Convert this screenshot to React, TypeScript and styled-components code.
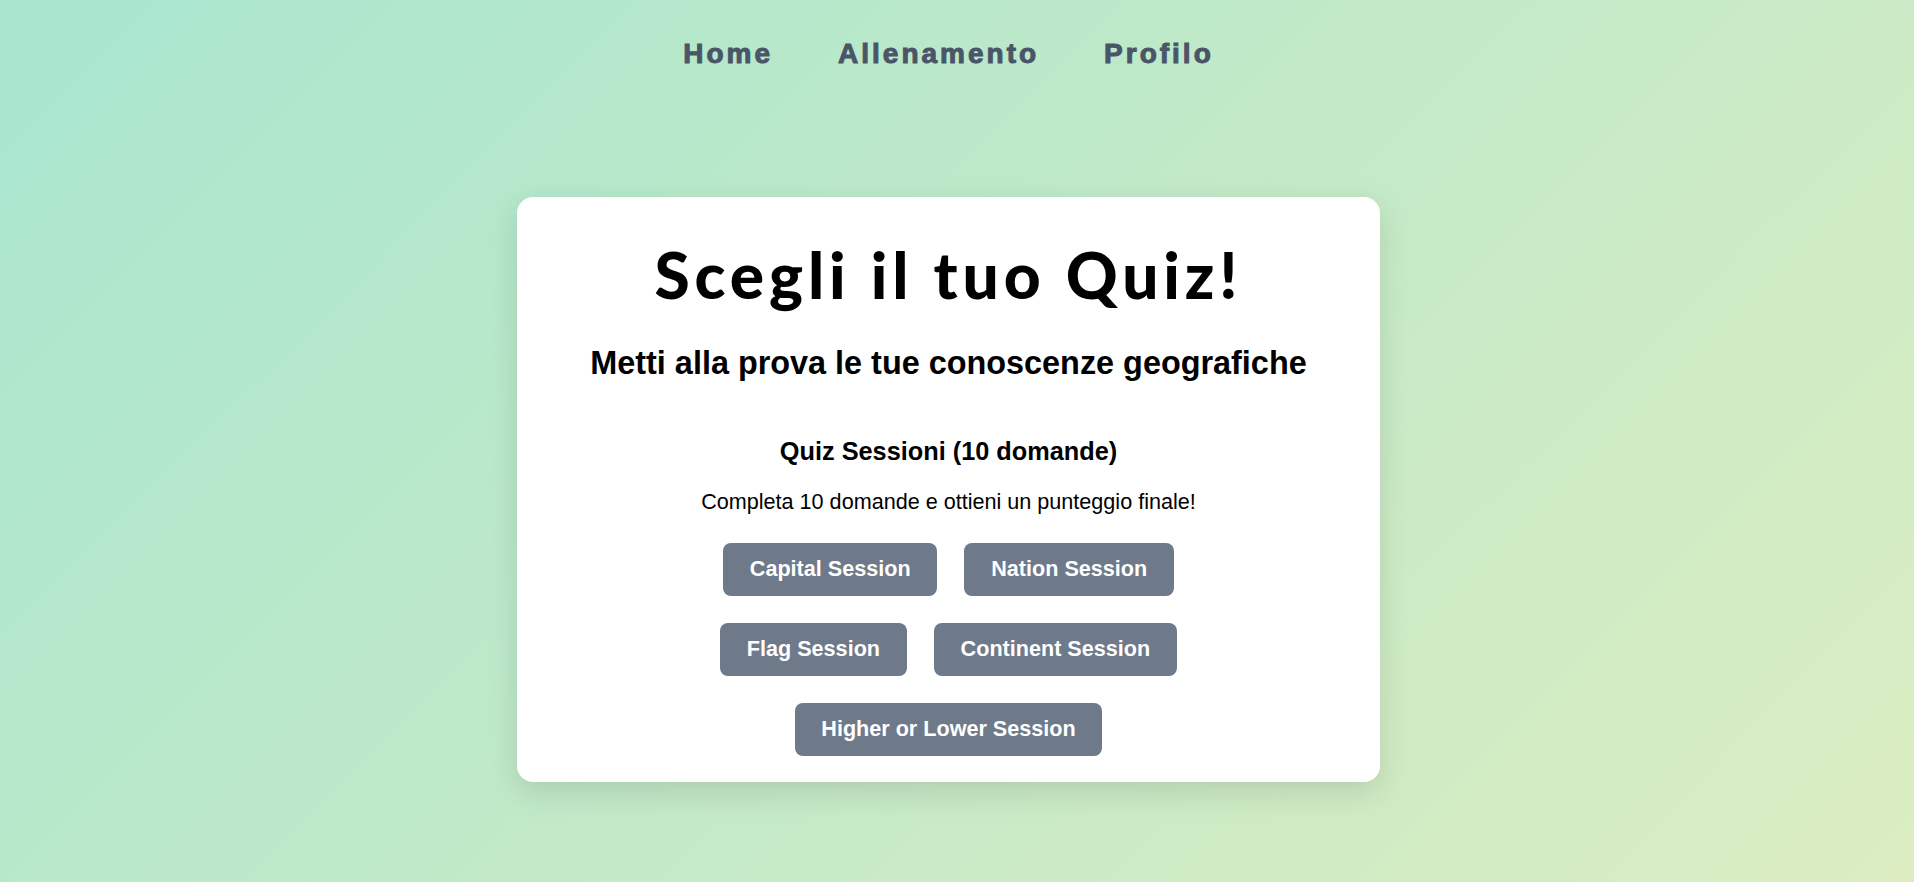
import React from "react";
import styled, { createGlobalStyle } from "styled-components";

const GlobalStyle = createGlobalStyle`
  html {
    background: linear-gradient(135deg, #a8e6cf 0%, #dcedc1 100%);
    min-height: 100%;
  }
  body {
    margin: 8px;
    font-family: "Liberation Sans", Arial, sans-serif;
    font-size: 21.6px;
    color: #000;
  }
`;

/* The reference layout is centred in a viewport narrowed by a 17px scrollbar. */
const Page = styled.div`
  min-height: 100vh;
  margin-right: 17px;
  display: flex;
  flex-direction: column;
  align-items: center;
`;

const Nav = styled.nav`
  display: flex;
  justify-content: center;
  gap: 65px;
  padding-top: 30px;
`;

const NavLink = styled.a`
  font-family: "Liberation Sans", Arial, sans-serif;
  font-size: 28px;
  line-height: 32px;
  font-weight: 700;
  letter-spacing: 3px;
  color: #4a5568;
  -webkit-text-stroke: 1px #4a5568;
  text-decoration: none;
  cursor: pointer;
`;

const Card = styled.main`
  box-sizing: border-box;
  width: 863px;
  margin-top: 127px;
  padding: 41px 30px 26px;
  background: #ffffff;
  border-radius: 16px;
  box-shadow: 0 10px 30px rgba(0, 0, 0, 0.12);
  text-align: center;
`;

const Title = styled.h1`
  margin: 0;
  font-family: "Comic Sans MS", "Lato", sans-serif;
  font-weight: 900;
  font-size: 64px;
  line-height: 73px;
  letter-spacing: 4.9px;
`;

const Subtitle = styled.h2`
  margin: 34px 0 0;
  font-size: 32.4px;
  line-height: 37.3px;
  font-weight: 700;
`;

const SectionTitle = styled.h3`
  margin: 55px 0 0;
  font-size: 25.3px;
  line-height: 29.1px;
  font-weight: 700;
`;

const Description = styled.p`
  margin: 24px 0 0;
  font-size: 21.6px;
  line-height: 24.8px;
`;

const ButtonStack = styled.div`
  margin-top: 28px;
  display: flex;
  flex-direction: column;
  gap: 27px;
`;

const ButtonRow = styled.div`
  display: flex;
  justify-content: center;
  gap: 27px;
`;

const SessionButton = styled.button`
  font-family: "Liberation Sans", Arial, sans-serif;
  font-size: 21.6px;
  line-height: 24.8px;
  font-weight: 700;
  color: #ffffff;
  background: #6e7a8a;
  border: none;
  border-radius: 8px;
  padding: 14px 26.8px;
  cursor: pointer;
`;

const rows: string[][] = [
  ["Capital Session", "Nation Session"],
  ["Flag Session", "Continent Session"],
  ["Higher or Lower Session"],
];

export default function App() {
  return (
    <>
      <GlobalStyle />
      <Page>
        <Nav>
          <NavLink>Home</NavLink>
          <NavLink>Allenamento</NavLink>
          <NavLink>Profilo</NavLink>
        </Nav>
        <Card>
          <Title>Scegli il tuo Quiz!</Title>
          <Subtitle>Metti alla prova le tue conoscenze geografiche</Subtitle>
          <SectionTitle>Quiz Sessioni (10 domande)</SectionTitle>
          <Description>Completa 10 domande e ottieni un punteggio finale!</Description>
          <ButtonStack>
            {rows.map((row, i) => (
              <ButtonRow key={i}>
                {row.map((label) => (
                  <SessionButton key={label}>{label}</SessionButton>
                ))}
              </ButtonRow>
            ))}
          </ButtonStack>
        </Card>
      </Page>
    </>
  );
}
